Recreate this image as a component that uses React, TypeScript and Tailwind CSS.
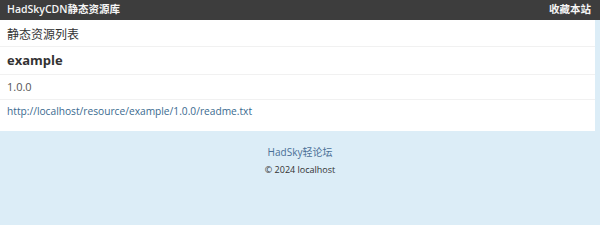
import React from 'react';

const font = { fontFamily: '"Open Sans", "Noto Sans CJK SC", sans-serif' };

const Row: React.FC<{ className?: string; children: React.ReactNode }> = ({ className = '', children }) => (
  <div className={`flex items-center border-b border-[#f1f1f1] px-[7px] ${className}`}>{children}</div>
);

export default function App() {
  return (
    <div className="min-h-[225px] w-[600px] bg-[#dcedf7]" style={font}>
      <header className="flex h-[20px] items-center justify-between bg-[#3d3d3d] px-[7px] text-[10.5px] font-semibold text-[#f5f5f5]">
        <span>HadSkyCDN静态资源库</span>
        <span className="pr-[2px]">收藏本站</span>
      </header>

      <main className="w-[595px] bg-white pb-[7px]">
        <Row className="h-[27px] pt-[3px] text-[12px] text-[#333]">静态资源列表</Row>
        <Row className="h-[28px] pt-[1px] text-[13px] font-bold text-[#333]">example</Row>
        <Row className="h-[25px] pt-[1px] text-[11px] text-[#555]">1.0.0</Row>
        <div className="flex h-[24px] items-center px-[7px]">
          <a href="#" className="text-[10.2px] text-[#3a6a8f]">
            http://localhost/resource/example/1.0.0/readme.txt
          </a>
        </div>
      </main>

      <footer className="flex flex-col items-center pt-[14px]">
        <a href="#" className="text-[10px] text-[#4a6f96]">HadSky轻论坛</a>
        <p className="mt-[3px] text-[9px] font-medium text-[#333]">© 2024 localhost</p>
      </footer>
    </div>
  );
}
